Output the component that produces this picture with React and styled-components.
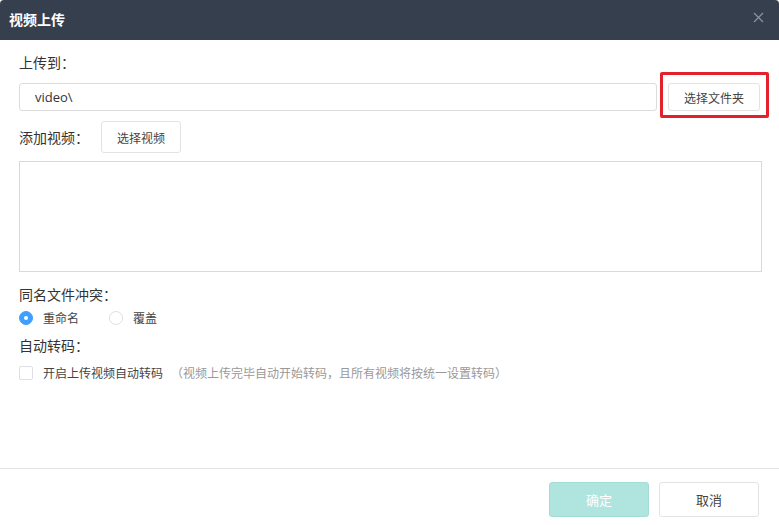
import React from 'react';
import styled, { createGlobalStyle } from 'styled-components';

const Global = createGlobalStyle`
  html, body { margin:0; padding:0; background:#fff; }
  body { font-family:"Noto Sans CJK SC","Liberation Sans",sans-serif; }
  * { box-sizing:border-box; }
`;

const Dialog = styled.div`
  width:779px;
  height:525px;
  display:flex;
  flex-direction:column;
  background:#fff;
  border-radius:4px 4px 0 0;
  overflow:hidden;
`;

const Header = styled.div`
  height:40px;
  flex:none;
  background:#363f4e;
  display:flex;
  align-items:center;
  justify-content:space-between;
  padding:0 10px 0 9px;
`;

const Title = styled.div`
  color:#fff;
  font-size:14px;
  font-weight:700;
  line-height:20px;
  margin-top:-2px;
`;

const Close = styled.div`
  width:14px;
  height:14px;
  display:flex;
  align-items:center;
  justify-content:center;
  margin-top:-6px;
  margin-right:4px;
`;

const Body = styled.div`
  flex:1;
  padding:12px 19px 0 19px;
  display:flex;
  flex-direction:column;
`;

const Label = styled.div`
  font-size:14px;
  line-height:20px;
  color:#333;
  white-space:nowrap;
  margin-top:${p => p.$mt || 0}px;
`;

const Row = styled.div`
  display:flex;
  align-items:center;
  margin-top:${p => p.$mt || 0}px;
  gap:${p => p.$gap || 0}px;
`;

const PathInput = styled.div`
  flex:1;
  height:28px;
  border:1px solid #dcdcdc;
  border-radius:3px;
  padding-left:15px;
  display:flex;
  align-items:center;
  font-family:"Open Sans","Liberation Sans",sans-serif;
  font-size:13px;
  color:#333;
`;

const Button = styled.div`
  width:${p => p.$w}px;
  height:${p => p.$h}px;
  flex:none;
  display:flex;
  align-items:center;
  justify-content:center;
  border:1px solid ${p => (p.$primary ? '#a3ded6' : '#e3e3e3')};
  background:${p => (p.$primary ? '#b0e5df' : '#fff')};
  color:${p => (p.$primary ? '#fff' : '#444')};
  border-radius:3px;
  font-size:${p => p.$fs || 12}px;
  position:relative;
`;

const Highlight = styled.div`
  position:absolute;
  top:-12px;
  left:-9px;
  right:-10px;
  bottom:-8px;
  border:3px solid #e3202b;
  border-radius:2px;
  pointer-events:none;
`;

const FileBox = styled.div`
  height:111px;
  margin-top:8px;
  border:1px solid #d9d9d9;
  margin-right:-2px;
`;

const Option = styled.div`
  display:flex;
  align-items:center;
  font-size:12px;
  color:#444;
  line-height:20px;
  gap:10px;
`;

const Radio = styled.span`
  width:14px;
  height:14px;
  border-radius:50%;
  flex:none;
  border:1px solid ${p => (p.$on ? '#409eff' : '#dcdfe6')};
  background:${p => (p.$on ? '#409eff' : '#fff')};
  display:flex;
  align-items:center;
  justify-content:center;
  &::after {
    content:'';
    width:4px;
    height:4px;
    border-radius:50%;
    background:#fff;
    display:${p => (p.$on ? 'block' : 'none')};
  }
`;

const Check = styled.span`
  width:14px;
  height:14px;
  flex:none;
  border:1px solid #dcdfe6;
  border-radius:2px;
  background:#fff;
`;

const Note = styled.span`
  color:#999;
  margin-left:-2px;
`;

const Footer = styled.div`
  height:57px;
  flex:none;
  border-top:1px solid #e4e4e4;
  display:flex;
  justify-content:flex-end;
  align-items:flex-start;
  padding:13px 20px 0 0;
  gap:10px;
`;

export default function App() {
  return (
    <Dialog>
      <Global />
      <Header>
        <Title>视频上传</Title>
        <Close>
          <svg width="11" height="11" viewBox="0 0 11 11">
            <path d="M1 1 L10 10 M10 1 L1 10" stroke="#8a93a0" strokeWidth="1.2" />
          </svg>
        </Close>
      </Header>
      <Body>
        <Label>上传到：</Label>
        <Row $mt={11} $gap={11}>
          <PathInput>video\</PathInput>
          <Button $w={92} $h={28}>
            选择文件夹
            <Highlight />
          </Button>
        </Row>
        <Row $mt={10} $gap={12}>
          <Label>添加视频：</Label>
          <Button $w={80} $h={32}>选择视频</Button>
        </Row>
        <FileBox />
        <Label $mt={12}>同名文件冲突：</Label>
        <Row $mt={4} $gap={30}>
          <Option><Radio $on />重命名</Option>
          <Option><Radio />覆盖</Option>
        </Row>
        <Label $mt={7}>自动转码：</Label>
        <Row $mt={8}>
          <Option>
            <Check />
            开启上传视频自动转码
            <Note>（视频上传完毕自动开始转码，且所有视频将按统一设置转码）</Note>
          </Option>
        </Row>
      </Body>
      <Footer>
        <Button $primary $w={100} $h={35} $fs={13}>确定</Button>
        <Button $w={100} $h={35} $fs={13}>取消</Button>
      </Footer>
    </Dialog>
  );
}
